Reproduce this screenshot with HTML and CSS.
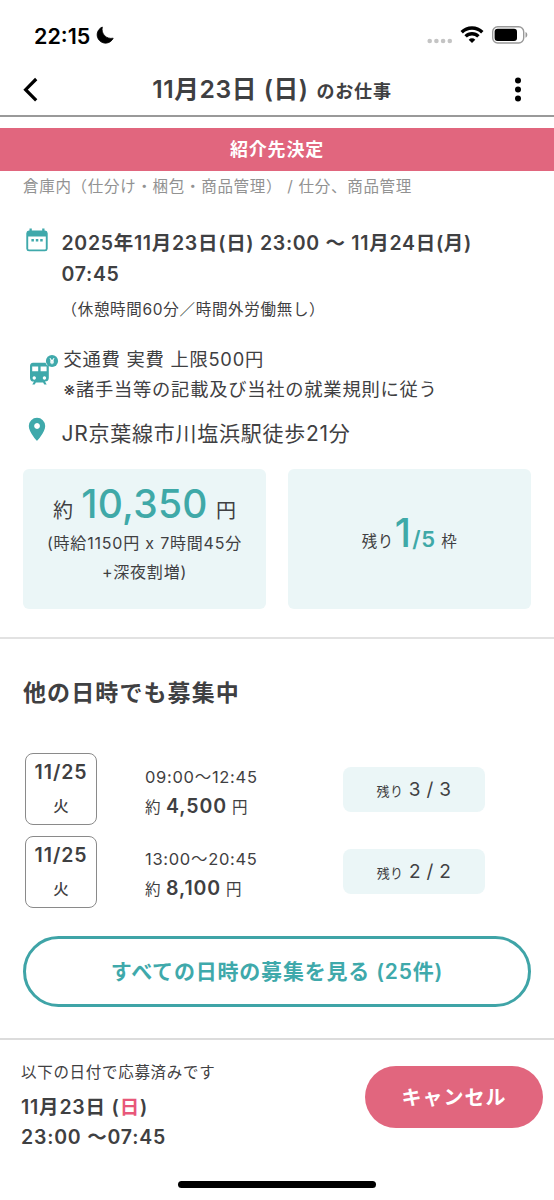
FILE: index.html
```html
<!DOCTYPE html>
<html lang="ja">
<head>
<meta charset="utf-8">
<title>11月23日 (日) のお仕事</title>
<link rel="stylesheet" href="styles.css">
</head>
<body>
<div class="screen">
  <div class="status">
    <span class="clock">22:15</span>
    <svg class="moon" width="18" height="18" viewBox="0 0 18 18"><path d="M6.300 1A8.400 8.400 0 1 0 17.200 12.200C10.500 13.500 4.800 8 6.300 1Z" stroke="#000" stroke-width=".8" stroke-linejoin="round"/></svg>
    <svg class="cell" width="26" height="6" viewBox="0 0 26 6"><circle cx="2.700" cy="3" r="2.300"/><circle cx="9.400" cy="3" r="2.300"/><circle cx="16.100" cy="3" r="2.300"/><circle cx="22.800" cy="3" r="2.300"/></svg>
    <svg class="wifi" width="24" height="18" viewBox="0 0 24 18"><path class="arc" d="M1.700 6.300a14.600 14.600 0 0 1 20.600 0M5.600 10.400a9.100 9.100 0 0 1 12.800 0"/><path d="M12 17 8.700 13.700a4.700 4.700 0 0 1 6.600 0Z"/></svg>
    <svg class="battery" width="36" height="18" viewBox="0 0 36 18"><rect class="case" x=".7" y=".7" width="31" height="16.300" rx="5"/><rect x="2.600" y="2.700" width="22.400" height="12.300" rx="3"/><path class="tip" d="M33.500 6c2.400.8 2.400 4.900 0 5.700Z"/></svg>
  </div>
  <header class="header">
    <svg class="back" width="16" height="26" viewBox="0 0 16 26"><path d="M13.200 2 2.600 12.700 13.200 23.400"/></svg>
    <h1 class="title"><span>11月23日 (日)</span><span class="title-sub">のお仕事</span></h1>
    <svg class="more" width="8" height="26" viewBox="0 0 8 26"><circle cx="4" cy="3.500" r="3"/><circle cx="4" cy="12.500" r="3"/><circle cx="4" cy="21.500" r="3"/></svg>
  </header>
  <div class="banner">紹介先決定</div>
  <main>
    <p class="category">倉庫内（仕分け・梱包・商品管理） / 仕分、商品管理</p>
    <section class="row row-date">
      <svg class="icon" width="24" height="26" viewBox="0 0 24 26"><path fill-rule="evenodd" d="M4.500 1.500h2.300v2h10.400v-2h2.300v2h.5a3 3 0 0 1 2.700 2.800v15.400a2.800 2.800 0 0 1-2.700 2.600H4a2.800 2.800 0 0 1-2.700-2.600V6.300A3 3 0 0 1 4 3.500h.5ZM3.200 9.400v12.100c0 .6.400 1 1 1h15.600c.6 0 1-.4 1-1V9.400Z"/><path d="M6.400 12h2.500v2.500H6.400ZM10.800 12h2.500v2.500h-2.500ZM15.200 12h2.500v2.500h-2.500Z"/></svg>
      <div class="when">
        <p class="when-main">2025年11月23日(日) 23:00 〜 11月24日(月)<br>07:45</p>
        <p class="when-note">（休憩時間60分／時間外労働無し）</p>
      </div>
    </section>
    <section class="row row-fare">
      <svg class="icon" width="32" height="32" viewBox="0 0 32 32"><path fill-rule="evenodd" d="M6 8.700h12.500a4 4 0 0 0 3.300 3V24a3.800 3.800 0 0 1-3.800 3.600l1.700 3h-2.400l-1.200-2H8.900l-1.200 2H5.300l1.700-3A3.800 3.800 0 0 1 3 24V12c0-2 1-3.300 3-3.300ZM5.200 12.600v4.700h6v-4.700Zm8.400 0v4.700h6v-4.700ZM7.200 22.300a1.700 1.700 0 1 0 .1 0Zm10.200 0a1.700 1.700 0 1 0 .1 0Z"/><circle cx="25" cy="7" r="6.100"/><path class="yen" d="m22.900 4.200 2.100 2.900 2.100-2.900M25 7v3.200M23.100 7.100h3.800M23.100 8.700h3.800"/></svg>
      <p class="fare">交通費 実費 上限500円<br>※諸手当等の記載及び当社の就業規則に従う</p>
    </section>
    <section class="row row-place">
      <svg class="icon" width="18" height="25" viewBox="0 0 18 25"><path fill-rule="evenodd" d="M9 .8a8.200 8.200 0 0 1 8.200 8.200C17.200 15.200 9 24 9 24S.8 15.200.8 9A8.200 8.200 0 0 1 9 .8Zm0 5.300a2.900 2.900 0 1 0 .1 0Z"/></svg>
      <p class="place">JR京葉線市川塩浜駅徒歩21分</p>
    </section>
    <section class="cards">
      <div class="card">
        <p class="pay">約 <strong>10,350</strong> 円</p>
        <p class="pay-note">(時給1150円 x 7時間45分<br>+深夜割増)</p>
      </div>
      <div class="card">
        <p class="left">残り<strong>1</strong><b>/5</b> 枠</p>
      </div>
    </section>
    <section class="others">
      <h2>他の日時でも募集中</h2>
      <div class="slot">
        <div class="day"><b>11/25</b><span>火</span></div>
        <div class="info"><p class="hours">09:00〜12:45</p><p class="wage">約 <b>4,500</b> 円</p></div>
        <div class="chip"><small>残り</small> 3 / 3</div>
      </div>
      <div class="slot">
        <div class="day"><b>11/25</b><span>火</span></div>
        <div class="info"><p class="hours">13:00〜20:45</p><p class="wage">約 <b>8,100</b> 円</p></div>
        <div class="chip"><small>残り</small> 2 / 2</div>
      </div>
      <button class="all">すべての日時の募集を見る (25件)</button>
    </section>
  </main>
  <footer class="footer">
    <div class="applied">
      <p class="applied-note">以下の日付で応募済みです</p>
      <p class="applied-date">11月23日 (<span class="sun">日</span>)<br>23:00 〜07:45</p>
    </div>
    <button class="cancel">キャンセル</button>
  </footer>
  <div class="home"></div>
</div>
</body>
</html>
```
FILE: styles.css
```css
* { box-sizing: border-box; margin: 0; padding: 0; }
body { background: #fff; color: #3f4042; font-family: Inter, "Noto Sans CJK JP", sans-serif; }
p, h1, h2, button, .banner, .chip { white-space: nowrap; }
button { font-family: inherit; }
.screen { width: 554px; height: 1200px; overflow: hidden; display: flex; flex-direction: column; }

.status { height: 64px; padding: 7px 26px 0 34px; display: flex; align-items: center; }
.clock { width: 57px; font-size: 21.500px; font-weight: 600; color: #000; line-height: 26px; }
.moon { margin: 0 0 1px 5px; }
.cell { margin: 11px 7px 0 auto; fill: #c4c4c4; }
.wifi { margin: 0 8px 2px 0; }
.battery { margin-bottom: 1px; }
.arc { fill: none; stroke: #000; stroke-width: 3.400; }
.case { fill: none; stroke: #999; stroke-width: 1.400; }
.tip { fill: #999; }

.header { height: 53px; padding: 0 32px 0 23px; display: flex; align-items: center; justify-content: space-between; border-bottom: 2px solid #999; }
.back path { fill: none; stroke: #000; stroke-width: 3.200; }
.title { display: flex; margin: 1px 9px 0 0; font-size: 24.700px; font-weight: 600; line-height: 36px; letter-spacing: .55px; }
.title-sub { margin-left: 8px; padding-top: 3px; font-size: 18px; letter-spacing: .8px; }

.banner { margin-top: 11px; height: 43px; background: #e1667e; color: #fff; text-align: center; font-size: 18px; font-weight: 600; line-height: 44px; letter-spacing: .8px; }
.category { padding-left: 23px; height: 30px; font-size: 15.500px; line-height: 32px; letter-spacing: .7px; color: #929292; }

.row { display: flex; align-items: flex-start; fill: #3fa9ab; }
.icon { flex: none; }
.row-date { padding: 26px 0 0 25px; height: 141px; }
.when { margin-left: 12.500px; padding-top: .5px; }
.when-main { font-size: 19.500px; font-weight: 600; line-height: 31.500px; letter-spacing: .7px; }
.when-note { margin-top: 4px; font-size: 15.500px; line-height: 30px; letter-spacing: .7px; }
.row-fare { padding: 2px 0 0 27px; height: 74px; }
.row-fare .icon { margin-top: 10px; }
.yen { fill: none; stroke: #fff; stroke-width: 1.100; }
.fare { margin-left: 4.500px; font-size: 18.300px; line-height: 30px; letter-spacing: .75px; }
.row-place { padding: 1px 0 0 28px; height: 53px; }
.place { margin-left: 15.500px; font-size: 21px; line-height: 34px; letter-spacing: .75px; }

.cards { display: grid; grid-template-columns: 243px 243px; gap: 22px; padding: 0 23px 28px; border-bottom: 2px solid #e2e2e2; }
.card { height: 140px; border-radius: 6px; background: #ebf6f7; text-align: center; }
.pay { padding-top: 8px; font-size: 20px; line-height: 54px; height: 60px; word-spacing: 2.500px; }
.pay strong { font-size: 39px; font-weight: 500; letter-spacing: .3px; color: #3fa9a8; }
.pay-note { font-size: 16px; line-height: 29px; letter-spacing: .8px; }
.left { padding-top: 37px; font-size: 15.500px; line-height: 54px; letter-spacing: .5px; word-spacing: 1px; }
.left strong { margin: 0 1px; font-size: 39px; font-weight: 500; color: #3fa9a8; }
.left b { font-size: 22px; font-weight: 600; color: #3fa9a8; }

.others { padding: 34px 23px 31px; }
h2 { font-size: 23px; font-weight: 600; line-height: 40px; letter-spacing: 1.100px; }
.slot { display: flex; align-items: center; height: 72px; margin: 0 46px 10.500px 2px; }
h2 + .slot { margin-top: 40px; }
.day { width: 72px; height: 72px; border: 1px solid #8a8a8a; border-radius: 8px; display: flex; flex-direction: column; align-items: center; }
.day b { font-size: 19.500px; font-weight: 600; line-height: 37px; letter-spacing: .9px; }
.day span { font-size: 15.500px; font-weight: 500; line-height: 32px; }
.info { margin-left: 48px; padding-top: 6px; flex: 1; }
.hours { font-size: 16.500px; line-height: 29px; letter-spacing: .7px; }
.wage { font-size: 15.500px; line-height: 29px; letter-spacing: .6px; }
.wage b { font-size: 19.500px; font-weight: 600; letter-spacing: .9px; }
.chip { width: 142px; height: 45px; border-radius: 8px; background: #ebf6f7; text-align: center; font-size: 19px; line-height: 46px; letter-spacing: .3px; }
.chip small { font-size: 13px; }
.all { display: block; width: 508px; height: 71px; margin-top: 28px; padding-bottom: 2px; border: 3px solid #3fa4a7; border-radius: 36px; background: #fff; color: #3fa9ab; font-size: 21px; font-weight: 600; letter-spacing: .8px; }

.footer { border-top: 2px solid #dcdcdc; padding: 18px 11px 0 21px; display: flex; justify-content: space-between; height: 143px; }
.applied-note { font-size: 15.500px; line-height: 30px; letter-spacing: .7px; }
.applied-date { margin-top: 4px; font-size: 19.500px; font-weight: 600; line-height: 30px; letter-spacing: .8px; }
.sun { color: #e8577a; }
.cancel { width: 178px; height: 62px; margin-top: 8px; border: 0; border-radius: 31px; background: #e1667e; color: #fff; font-size: 20px; font-weight: 600; letter-spacing: 1px; }
.home { width: 198px; height: 7px; border-radius: 4px; background: #000; margin: 0 auto; }
```
